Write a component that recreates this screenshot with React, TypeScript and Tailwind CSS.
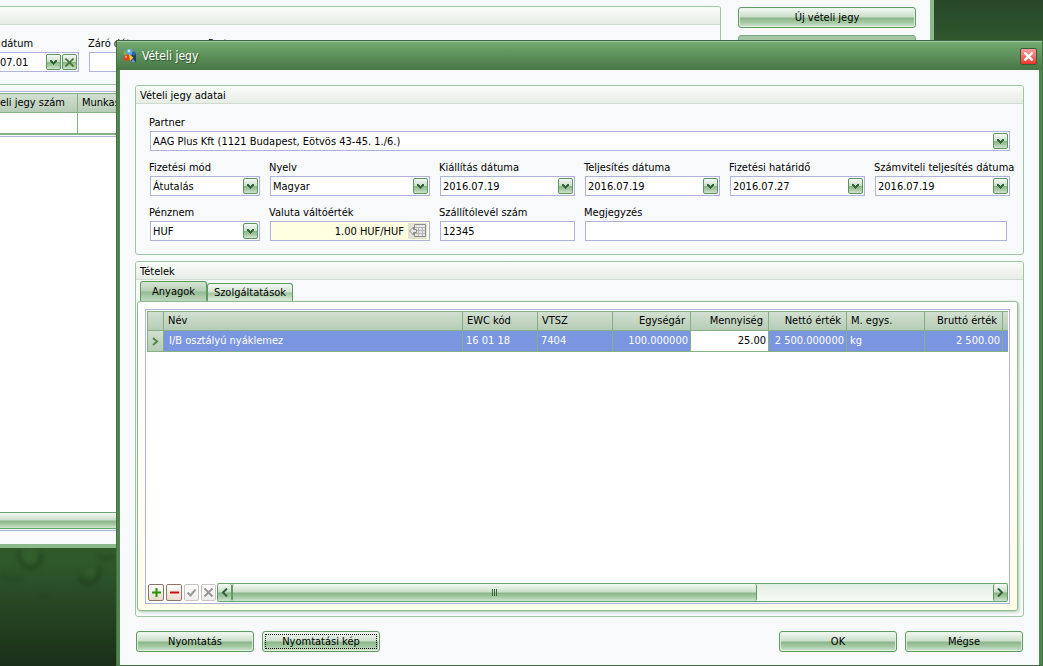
import React, { useState } from 'react';
import clsx from 'clsx';

const GLOSS = 'bg-[linear-gradient(180deg,#f4f9f4_0%,#cbdeca_48%,#8ab588_52%,#a9cba7_78%,#d2e5d1_100%)]';
const BOX = 'flex h-5 items-center border border-[#b0b3d9] bg-white';

/* ---------- small building blocks ---------- */

const ChevronIcon = () => (
    <svg viewBox="0 0 7 5" className="h-[5px] w-[7px]" shapeRendering="crispEdges" fill="#35663a">
        <path d="M0 0h2v1h1v1h1v-1h1v-1h2v2h-1v1h-1v1h-1v1h-1v-1h-1v-1h-1v-1h-1z" />
    </svg>
);

const MiniButton: React.FC<{ label: string; className?: string; children: React.ReactNode }> = ({ label, className, children }) => (
    <button
        type="button"
        aria-label={label}
        className={clsx(GLOSS, 'mr-px flex h-4 w-[15px] shrink-0 items-center justify-center rounded-[2px] border border-[#5c945f]', className)}
    >
        {children}
    </button>
);

const ActionButton: React.FC<{ children: React.ReactNode; focused?: boolean; className?: string }> = ({ children, focused, className }) => (
    <button
        type="button"
        className={clsx(GLOSS, 'h-[21px] rounded-[3px] border border-[#5f9a62] p-px shadow-[inset_0_0_0_1px_#e8f2e8cc]', className)}
    >
        <span className={clsx('flex items-center justify-center', focused ? 'm-px h-[15px] border border-dotted border-black' : 'h-full pt-px')}>
            {children}
        </span>
    </button>
);

interface FieldProps {
    id: string;
    label: string;
    value: string;
    kind?: 'select' | 'date' | 'text';
    className?: string;
}

const Field: React.FC<FieldProps> = ({ id, label, value, kind = 'text', className }) => {
    const [current, setCurrent] = useState(value);

    return (
        <div className={clsx('min-w-0', className)}>
            <label htmlFor={id} className="-ml-px block h-[17px] whitespace-nowrap pt-px leading-4">{label}</label>
            {kind === 'select' ? (
                <div className={clsx(BOX, 'relative')}>
                    <select id={id} className="h-full w-full appearance-none bg-transparent pl-0.5 pt-px leading-4 outline-none">
                        <option>{value}</option>
                    </select>
                    <span className={clsx(GLOSS, 'pointer-events-none absolute right-px top-px flex h-4 w-[15px] items-center justify-center rounded-[2px] border border-[#5c945f]')}>
                        <ChevronIcon />
                    </span>
                </div>
            ) : (
                <div className={BOX}>
                    <input
                        id={id}
                        value={current}
                        onChange={(e) => setCurrent(e.target.value)}
                        className="h-full w-full min-w-0 bg-transparent pl-0.5 leading-4 outline-none"
                    />
                    {kind === 'date' && (
                        <MiniButton label={`${label} naptár`}>
                            <ChevronIcon />
                        </MiniButton>
                    )}
                </div>
            )}
        </div>
    );
};

const GroupTitle: React.FC<{ children?: React.ReactNode }> = ({ children }) => (
    <h2 className="h-[18px] shrink-0 border-b border-[#cfdccf] bg-linear-to-b from-[#f9fcf8] to-[#e7ede6] pl-1 pt-px leading-[18px]">{children}</h2>
);

/* ---------- items grid ---------- */

const columns = [
    { name: 'Név', width: 'w-auto' },
    { name: 'EWC kód', width: 'w-[75px]' },
    { name: 'VTSZ', width: 'w-[75px]' },
    { name: 'Egységár', width: 'w-[78px]', right: true },
    { name: 'Mennyiség', width: 'w-[78px]', right: true },
    { name: 'Nettó érték', width: 'w-[78px]', right: true },
    { name: 'M. egys.', width: 'w-[78px]' },
    { name: 'Bruttó érték', width: 'w-[78px]', right: true },
];

const rows = [['I/B osztályú nyáklemez', '16 01 18', '7404', '100.000000', '25.00', '2 500.000000', 'kg', '2 500.00']];

const HEAD = 'border-b border-r border-[#84b084] bg-linear-to-b from-[#d2e0d1] to-[#b6ccb5]';

const ItemsTable = () => (
    <table className="w-full table-fixed border-separate border-spacing-0 border-l border-t border-[#84b084]">
        <thead>
            <tr className="h-[19px]">
                <th className={clsx(HEAD, 'w-4 p-0')} />
                {columns.map((c) => (
                    <th key={c.name} className={clsx(HEAD, c.width, 'whitespace-nowrap py-0 pl-1 pr-[5px] font-normal', c.right ? 'text-right' : 'text-left')}>
                        {c.name}
                    </th>
                ))}
                <th className={clsx(HEAD, 'w-[5px] border-r-0 p-0')} />
            </tr>
        </thead>
        <tbody>
            {rows.map((row) => (
                <tr key={row[0]} className="h-[21px]">
                    <td className={clsx(HEAD, 'p-0')}>
                        <svg viewBox="0 0 7 9" className="mx-auto h-[9px] w-[7px]" fill="none" stroke="#4f8a52" strokeWidth="2">
                            <path d="M1 1l4 3.500l-4 3.500" />
                        </svg>
                    </td>
                    {row.map((cell, i) => (
                        <td
                            key={columns[i].name}
                            className={clsx(
                                'whitespace-nowrap border-b border-r border-[#84b084] py-0 pr-0.5',
                                i === 0 ? 'pl-[5px]' : 'pl-[3px]',
                                columns[i].right && 'text-right',
                                i === 4 ? 'bg-white' : 'bg-[#7b96e0] text-white'
                            )}
                        >
                            {cell}
                        </td>
                    ))}
                    <td className="border-b border-[#84b084] bg-[#7b96e0] p-0" />
                </tr>
            ))}
        </tbody>
    </table>
);

const navigator = [
    { label: 'Hozzáadás', path: 'M4.500 0v9M0 4.500h9', color: '#2a9407', active: true },
    { label: 'Törlés', path: 'M0 4.500h9', color: '#cf0a0a', active: true },
    { label: 'Mentés', path: 'M0.500 4.500l3 3l5-6', color: '#979797', active: false },
    { label: 'Elvetés', path: 'M0.500 0.500l8 8M8.500 0.500l-8 8', color: '#979797', active: false },
];

const GridFooter = () => (
    <div className="flex h-[19px] shrink-0 items-center">
        <div className="mr-px flex gap-0.5 pl-px">
            {navigator.map((n) => (
                <button
                    key={n.label}
                    type="button"
                    aria-label={n.label}
                    className={clsx(
                        'flex h-[17px] items-center justify-center rounded-[2px] border bg-linear-to-b from-white',
                        n.active ? 'w-4 border-[#8f7466] to-[#e9dccb]' : 'w-[15px] border-[#c9c3bf] to-[#efedeb]'
                    )}
                >
                    <svg viewBox="0 0 9 9" className="h-[9px] w-[9px]" fill="none" stroke={n.color} strokeWidth="2">
                        <path d={n.path} />
                    </svg>
                </button>
            ))}
        </div>
        <div className="flex h-full min-w-0 flex-1 rounded-[2px] border-y border-[#6aa36c] bg-linear-to-b from-[#e3eee3] to-[#f4f9f4]">
            <button type="button" aria-label="Balra" className={clsx(GLOSS, 'flex w-[15px] shrink-0 items-center justify-center rounded-[2px] border-x border-[#5f9a62]')}>
                <svg viewBox="0 0 7 9" className="h-[9px] w-[7px]" fill="none" stroke="#35603a" strokeWidth="2">
                    <path d="M6 0.500l-4 4l4 4" />
                </svg>
            </button>
            <div className="flex min-w-0 flex-1">
                <div className={clsx(GLOSS, 'flex w-[69%] items-center justify-center gap-px rounded-[2px] border-x border-[#5f9a62]')}>
                    <span className="h-[7px] w-px bg-[#3c6640]" />
                    <span className="h-[7px] w-px bg-[#3c6640]" />
                    <span className="h-[7px] w-px bg-[#3c6640]" />
                </div>
            </div>
            <button type="button" aria-label="Jobbra" className={clsx(GLOSS, 'flex w-[15px] shrink-0 items-center justify-center rounded-[2px] border-x border-[#5f9a62]')}>
                <svg viewBox="0 0 7 9" className="h-[9px] w-[7px]" fill="none" stroke="#35603a" strokeWidth="2">
                    <path d="M1 0.500l4 4l-4 4" />
                </svg>
            </button>
        </div>
    </div>
);

const ItemsGroup = () => {
    const [tab, setTab] = useState('Anyagok');

    return (
        <section className="mt-1.5 flex min-h-0 flex-1 flex-col overflow-hidden rounded-[3px] border border-[#a3c4a4]">
            <GroupTitle>Tételek</GroupTitle>
            <div role="tablist" className="flex h-[21px] shrink-0 items-end pl-1 pt-px">
                {['Anyagok', 'Szolgáltatások'].map((name) => (
                    <button
                        key={name}
                        type="button"
                        role="tab"
                        aria-selected={tab === name}
                        onClick={() => setTab(name)}
                        className={clsx(
                            'rounded-t-[3px] border border-b-0 border-[#5f9a62]',
                            name === 'Anyagok' ? 'w-[67px]' : 'w-[86px]',
                            tab === name
                                ? 'h-5 bg-[linear-gradient(180deg,#d5e5d4_0%,#b5cfb4_48%,#93ba92_52%,#c0d8bf_100%)]'
                                : 'h-[18px] bg-[linear-gradient(180deg,#f2f7f2_0%,#d3e3d2_48%,#a2c5a1_52%,#e2eee1_100%)]'
                        )}
                    >
                        {name}
                    </button>
                ))}
            </div>
            <div className="mb-[5px] ml-px mr-[5px] flex min-h-0 flex-1 flex-col rounded-[3px] border border-[#92bb93] bg-linear-to-b from-white to-[#fffeea] p-[7px] pb-1.5 shadow-[1px_1px_3px_#a9c9a9]">
                <div className="flex min-h-0 flex-1 flex-col border border-[#b0b3d9] bg-white p-px">
                    <ItemsTable />
                    <div className="flex-1" />
                    <GridFooter />
                </div>
            </div>
        </section>
    );
};

/* ---------- dialog ---------- */

const AppIcon = () => (
    <svg viewBox="0 0 16 16" className="h-4 w-4">
        <circle cx="3.500" cy="5" r="2.200" fill="#7fae5c" />
        <circle cx="7.500" cy="4" r="3.200" fill="#5aa4de" />
        <circle cx="7" cy="3" r="1.400" fill="#c8e4fb" />
        <path d="M10.500 4.500l3.500 1v8.500l-6-1z" fill="#1c3a70" />
        <circle cx="12" cy="5.500" r="2" fill="#3565ae" />
        <circle cx="5" cy="9.800" r="3.200" fill="#e2401c" />
        <circle cx="4" cy="8.800" r="1.200" fill="#ff9a6a" />
        <path d="M7 6.500l4.500 3l-3.500 3.500z" fill="#f7d21e" />
        <path d="M9.500 13l1.500-2l2.500 3h-4z" fill="#6c97d2" />
    </svg>
);

const TicketDialog = () => (
    <div
        role="dialog"
        aria-label="Vételi jegy"
        className="absolute bottom-0 left-[116px] right-0 top-10 flex flex-col border border-t-[#3e6340] border-x-[#41703f] border-b-[#41703f] bg-[#518551]"
    >
        <header className="flex h-[29px] shrink-0 items-center border-t border-[#a3cba2] bg-linear-to-b from-[#72aa70] to-[#487646] pl-[5px] pr-[5px]">
            <AppIcon />
            <h1 className="ml-1 text-[12px] text-white [text-shadow:1px_1px_1px_#2f5530]">Vételi jegy</h1>
            <button
                type="button"
                aria-label="Bezárás"
                className="ml-auto flex h-[17px] w-[17px] items-center justify-center rounded-[2px] border border-[#395c3a] bg-linear-to-b from-[#fa9c9c] to-[#ee2f2c]"
            >
                <svg viewBox="0 0 9 9" className="h-[9px] w-[9px]" stroke="#fff" strokeWidth="2.500">
                    <path d="M0.500 0.500l8 8M8.500 0.500l-8 8" />
                </svg>
            </button>
        </header>

        <div className="mx-[3px] flex min-h-0 flex-1 flex-col bg-[#f8f9fb] px-[15px] pb-[13px] pt-[15px]">
            <section className="shrink-0 overflow-hidden rounded-[3px] border border-[#a3c4a4]">
                <GroupTitle>Vételi jegy adatai</GroupTitle>
                <div className="grid grid-cols-[110fr_160fr_135fr_135fr_135fr_135fr] gap-x-2.5 gap-y-2 pb-[13px] pl-3.5 pr-[13px] pt-2.5">
                    <Field id="partner" label="Partner" value="AAG Plus Kft (1121 Budapest, Eötvös 43-45. 1./6.)" kind="select" className="col-span-6" />

                    <Field id="fizetesi-mod" label="Fizetési mód" value="Átutalás" kind="select" />
                    <Field id="nyelv" label="Nyelv" value="Magyar" kind="select" />
                    <Field id="kiallitas" label="Kiállítás dátuma" value="2016.07.19" kind="date" />
                    <Field id="teljesites" label="Teljesítés dátuma" value="2016.07.19" kind="date" />
                    <Field id="hatarido" label="Fizetési határidő" value="2016.07.27" kind="date" />
                    <Field id="szamviteli" label="Számviteli teljesítés dátuma" value="2016.07.19" kind="date" />

                    <Field id="penznem" label="Pénznem" value="HUF" kind="select" />
                    <div className="min-w-0">
                        <label htmlFor="valto" className="-ml-px block h-[17px] pt-px leading-4">Valuta váltóérték</label>
                        <div className="flex h-5 items-center border border-[#b0b3d9] bg-[#ffffe1]">
                            <input id="valto" readOnly value="1.00 HUF/HUF" className="h-full w-full min-w-0 bg-transparent pr-1 text-right outline-none" />
                            <button type="button" aria-label="Árfolyam lekérése" className="mr-0.5 flex h-4 w-[19px] shrink-0 items-center justify-center bg-[#e4e2d2]">
                                <svg viewBox="0 0 17 14" className="h-[14px] w-[17px]" fill="#e6e6e6" stroke="#8c8c8c">
                                    <path d="M5.500 0.500h11v12h-11z" />
                                    <path d="M6 3.500h10M6 6.500h10M6 9.500h10M9.500 3v9M13.500 3v9" stroke="#b4b4b4" />
                                    <path d="M0.500 7l4-4v2.500h3v3h-3v2.500z" />
                                </svg>
                            </button>
                        </div>
                    </div>
                    <Field id="szallitolevel" label="Szállítólevél szám" value="12345" />
                    <Field id="megjegyzes" label="Megjegyzés" value="" className="col-span-3 mr-[3px]" />
                </div>
            </section>

            <ItemsGroup />

            <footer className="mt-3.5 flex shrink-0 gap-2 px-px">
                <ActionButton className="w-[118px]">Nyomtatás</ActionButton>
                <ActionButton className="w-[118px]" focused>Nyomtatási kép</ActionButton>
                <ActionButton className="ml-auto w-[118px]">OK</ActionButton>
                <ActionButton className="w-[118px]">Mégse</ActionButton>
            </footer>
        </div>
    </div>
);

/* ---------- list window behind the dialog ---------- */

const ListWindow = () => (
    <div className="relative mr-[109px] flex h-[548px] flex-col border-b-4 border-r-4 border-[#8bb98c] bg-[#f8f9fb]">
        <div className="flex pt-1.5">
            <section className="h-[79px] min-w-0 flex-1 overflow-hidden rounded-r-[3px] border border-l-0 border-[#a3c4a4]">
                <GroupTitle />
                <div className="flex pt-2.5">
                    <div className="w-[79px]">
                        <label htmlFor="kezdo" className="block h-[17px] pl-px pt-px leading-4">dátum</label>
                        <div className={clsx(BOX, 'border-l-0')}>
                            <input id="kezdo" defaultValue="07.01" className="h-full w-full min-w-0 bg-transparent outline-none" />
                            <MiniButton label="Naptár" className="mr-0.5">
                                <ChevronIcon />
                            </MiniButton>
                            <MiniButton label="Törlés">
                                <svg viewBox="0 0 9 9" className="h-[9px] w-[9px] shrink-0" stroke="#4a7035" strokeWidth="1.600">
                                    <path d="M0.500 0.500l8 8M8.500 0.500l-8 8" />
                                </svg>
                            </MiniButton>
                        </div>
                    </div>
                    <Field id="zaro" label="Záró dátum" value="" className="ml-2.5 w-[110px]" />
                    <Field id="lista-partner" label="Partner" value="" className="ml-2.5 w-[200px]" />
                </div>
            </section>
            <div className="ml-[17px] mr-3.5 flex w-[178px] shrink-0 flex-col gap-[7px] pt-px">
                <ActionButton>Új vételi jegy</ActionButton>
                <button type="button" aria-label="Módosítás" className="h-[21px] rounded-[3px] border border-[#7dab7f] bg-[#a5c6a5]" />
            </div>
        </div>

        <div className="mt-1.5 flex min-h-0 flex-1 flex-col border-y border-[#b0b3d9] bg-white">
            <table className="mt-px w-full table-fixed border-separate border-spacing-0 border-t border-[#84b084]">
                <thead>
                    <tr className="h-[19px]">
                        <th className={clsx(HEAD, 'w-[78px] whitespace-nowrap p-0 text-left font-normal')}>eli jegy szám</th>
                        <th className={clsx(HEAD, 'py-0 pl-1 text-left font-normal')}>Munkaszám</th>
                    </tr>
                </thead>
                <tbody>
                    <tr className="h-[22px]">
                        <td className="border-b-2 border-r border-[#84b084]" />
                        <td className="border-b-2 border-[#84b084]" />
                    </tr>
                </tbody>
            </table>
            <div className="mt-px border-t border-[#b0b3d9]" />
            <div className="flex-1" />
            <div className={clsx(GLOSS, 'mb-px h-[17px] border-y border-[#6aa36c]')} />
        </div>
        <div className="h-[13px] shrink-0" />
    </div>
);

// rain drops on the desktop background
const Wallpaper = () => (
    <svg className="absolute bottom-0 left-0 h-[118px] w-[117px] blur-[2px]" viewBox="0 0 117 118" fill="none" stroke="#1a3818" strokeLinecap="round">
        <g strokeOpacity="0.500" strokeWidth="4">
            <path d="M19 5c0 8 4 14 11 15s11-6 11-14" />
            <path d="M80 30c2 7 12 7 16 2s4-8 3-12" />
            <path d="M100 8c3 4 9 4 12 0" strokeOpacity="0.400" />
            <path d="M3 27c4 6 12 7 17 2" strokeOpacity="0.300" />
            <path d="M40 46c3 5 8 5 10 1" strokeOpacity="0.200" />
        </g>
        <ellipse cx="91" cy="24" rx="5" ry="4" fill="#3d6c35" fillOpacity="0.400" stroke="none" />
        <ellipse cx="30" cy="8" rx="8" ry="7" fill="#386631" fillOpacity="0.400" stroke="none" />
    </svg>
);

export default function App() {
    return (
        <main className="relative min-h-screen overflow-hidden bg-[linear-gradient(180deg,#27472a_0px,#33602f_60px,#2f592b_560px,#1a2f18_666px)] font-['DejaVu_Sans_Condensed','DejaVu_Sans',sans-serif] text-[11px] leading-4 text-black">
            <Wallpaper />
            <ListWindow />
            <TicketDialog />
        </main>
    );
}
